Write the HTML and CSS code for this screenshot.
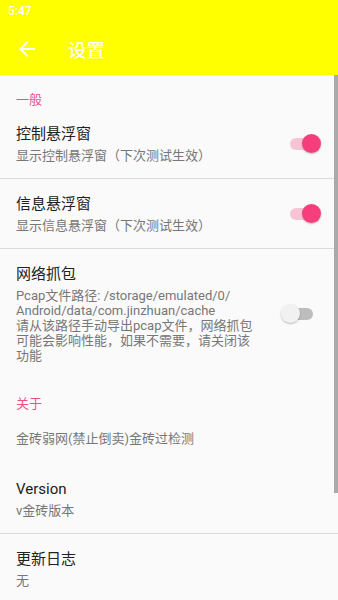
FILE: index.html
```html
<!DOCTYPE html>
<html lang="zh-CN">
<head>
<meta charset="utf-8">
<link rel="stylesheet" href="styles.css">
</head>
<body>
<div class="screen">
  <header class="appbar">
    <div class="statusbar">5:47</div>
    <div class="toolbar">
      <svg class="back" width="24" height="24" viewBox="0 0 24 24"><path d="M20 11H7.83l5.59-5.59L12 4l-8 8 8 8 1.41-1.41L7.83 13H20v-2z" fill="#fff"/></svg>
      <div class="title">设置</div>
    </div>
  </header>
  <main class="list">
    <div class="category">一般</div>
    <div class="pref">
      <div class="text">
        <div class="ptitle">控制悬浮窗</div>
        <div class="psum">显示控制悬浮窗（下次测试生效）</div>
      </div>
      <div class="switch on"><span class="track"></span><span class="thumb"></span></div>
    </div>
    <div class="divider"></div>
    <div class="pref">
      <div class="text">
        <div class="ptitle">信息悬浮窗</div>
        <div class="psum">显示信息悬浮窗（下次测试生效）</div>
      </div>
      <div class="switch on"><span class="track"></span><span class="thumb"></span></div>
    </div>
    <div class="divider"></div>
    <div class="pref last">
      <div class="text">
        <div class="ptitle">网络抓包</div>
        <div class="psum">Pcap文件路径: /storage/emulated/0/<br>Android/data/com.jinzhuan/cache<br>请从该路径手动导出pcap文件，网络抓包<br>可能会影响性能，如果不需要，请关闭该<br>功能</div>
      </div>
      <div class="switch off"><span class="track"></span><span class="thumb"></span></div>
    </div>
    <div class="category">关于</div>
    <div class="pref about">
      <div class="psum">金砖弱网(禁止倒卖)金砖过检测</div>
    </div>
    <div class="pref">
      <div class="text">
        <div class="ptitle">Version</div>
        <div class="psum">v金砖版本</div>
      </div>
    </div>
    <div class="divider"></div>
    <div class="pref">
      <div class="text">
        <div class="ptitle">更新日志</div>
        <div class="psum">无</div>
      </div>
    </div>
  </main>
  <div class="scrollbar"></div>
</div>
</body>
</html>
```
FILE: styles.css
```css
* { box-sizing: border-box; }
html, body { margin: 0; padding: 0; }
body {
  width: 338px;
  height: 600px;
  overflow: hidden;
  background: #fafafa;
  font-family: Roboto, "Noto Sans CJK SC", sans-serif;
}
.screen { position: relative; height: 600px; overflow: hidden; }
.appbar { background: #ffff00; height: 75px; }
.statusbar {
  height: 23px;
  padding-left: 8px;
  color: #fff;
  font-size: 12px;
  font-weight: 500;
  line-height: 23px;
}
.toolbar {
  height: 52px;
  display: flex;
  align-items: center;
}
.back { margin-left: 15px; flex: none; }
.title {
  margin-left: 29px;
  color: #fff;
  font-size: 18.5px;
  font-weight: 500;
}
.list { display: flex; flex-direction: column; }
.category {
  padding: 16px 16px 0;
  height: 34px;
  line-height: 18px;
  font-size: 13px;
  color: #ee4f88;
}
.pref {
  display: flex;
  align-items: center;
  padding: 15px 0 15px 16px;
}
.pref.last { padding-bottom: 16px; }
.pref.about { padding-top: 18px; padding-bottom: 18px; }
.text { flex: 1; min-width: 0; }
.ptitle {
  font-size: 15px;
  line-height: 21px;
  color: #212121;
}
.psum {
  margin-top: 3px;
  font-size: 13px;
  line-height: 15px;
  color: #777;
}
.about .psum { margin-top: 0; }
.divider { height: 1px; background: #dcdcdc; }
.switch { position: relative; width: 31px; height: 20px; flex: none; }
.switch .track {
  position: absolute;
  top: 4px;
  width: 29px;
  height: 12px;
  border-radius: 6px;
}
.switch .thumb {
  position: absolute;
  top: 0;
  width: 19px;
  height: 19px;
  border-radius: 50%;
  box-shadow: 0 1px 2px rgba(0,0,0,0.25);
}
.switch.on { margin-right: 17px; }
.switch.on .track { left: 0; background: #f9c3d6; }
.switch.on .thumb { right: 0; background: #f73e7c; }
.switch.off { margin-right: 25px; width: 32px; }
.switch.off .track { left: 3px; background: #bdbdbd; }
.switch.off .thumb { left: 0; background: #f1f1f1; }
.scrollbar {
  position: absolute;
  right: 0;
  top: 75px;
  width: 4px;
  height: 418px;
  background: #aaa;
}
```
